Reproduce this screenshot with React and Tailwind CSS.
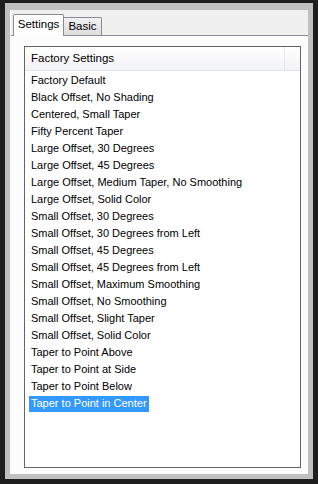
import React from "react";

const items = [
  "Factory Default",
  "Black Offset, No Shading",
  "Centered, Small Taper",
  "Fifty Percent Taper",
  "Large Offset, 30 Degrees",
  "Large Offset, 45 Degrees",
  "Large Offset, Medium Taper, No Smoothing",
  "Large Offset, Solid Color",
  "Small Offset, 30 Degrees",
  "Small Offset, 30 Degrees from Left",
  "Small Offset, 45 Degrees",
  "Small Offset, 45 Degrees from Left",
  "Small Offset, Maximum Smoothing",
  "Small Offset, No Smoothing",
  "Small Offset, Slight Taper",
  "Small Offset, Solid Color",
  "Taper to Point Above",
  "Taper to Point at Side",
  "Taper to Point Below",
  "Taper to Point in Center",
];

const App = () => {
  const selected = items.length - 1;

  return (
    <div className="w-[318px] h-[484px] bg-[#1e1e1e] pt-[3px] pl-[5px] pr-[5px] pb-[5px] font-['Liberation_Sans',Arial,sans-serif] text-[11px] text-black">
      <div className="h-full bg-[#c0c0c0] pt-[7px] px-[5px] pb-[5px]">
        <div className="h-full flex flex-col bg-[#f0f0f0] border-l border-[#fdfdfd]">
          <div className="h-[25px] flex items-end pl-[2px] relative z-10 text-[11.5px]">
            <div className="h-[22px] w-[51px] -mb-[1px] bg-white border border-b-0 border-[#898c95] rounded-t-[2px] flex items-center justify-center pb-[2px]">
              Settings
            </div>
            <div className="h-[18px] w-[38px] bg-gradient-to-b from-[#f2f2f2] to-[#dddddd] border-t border-r border-[#898c95] rounded-tr-[2px] flex items-center justify-center">
              Basic
            </div>
          </div>
          <div className="flex-1 bg-[#fcfcfc] border-t border-[#898c95] pl-[13px] pr-[7px] pt-[10px] pb-[6px]">
            <div className="h-full border border-[#646464] bg-white flex flex-col">
              <div className="h-[24px] flex border-b border-[#e3e5e8] bg-gradient-to-b from-white to-[#f2f3f5]">
                <div className="w-[260px] flex items-center pl-[6px] border-r border-[#e3e5e8] text-[11.5px]">
                  Factory Settings
                </div>
                <div className="flex-1" />
              </div>
              <div className="flex flex-col pt-[1px]">
                {items.map((item, i) => (
                  <div key={item} className="h-[17px] flex items-center pl-[4px]">
                    <span
                      className={
                        i === selected
                          ? "px-[2px] h-[16px] flex items-center bg-[#3399ff] text-white"
                          : "px-[2px] h-[16px] flex items-center"
                      }
                    >
                      {item}
                    </span>
                  </div>
                ))}
              </div>
            </div>
          </div>
        </div>
      </div>
    </div>
  );
};

export default App;
